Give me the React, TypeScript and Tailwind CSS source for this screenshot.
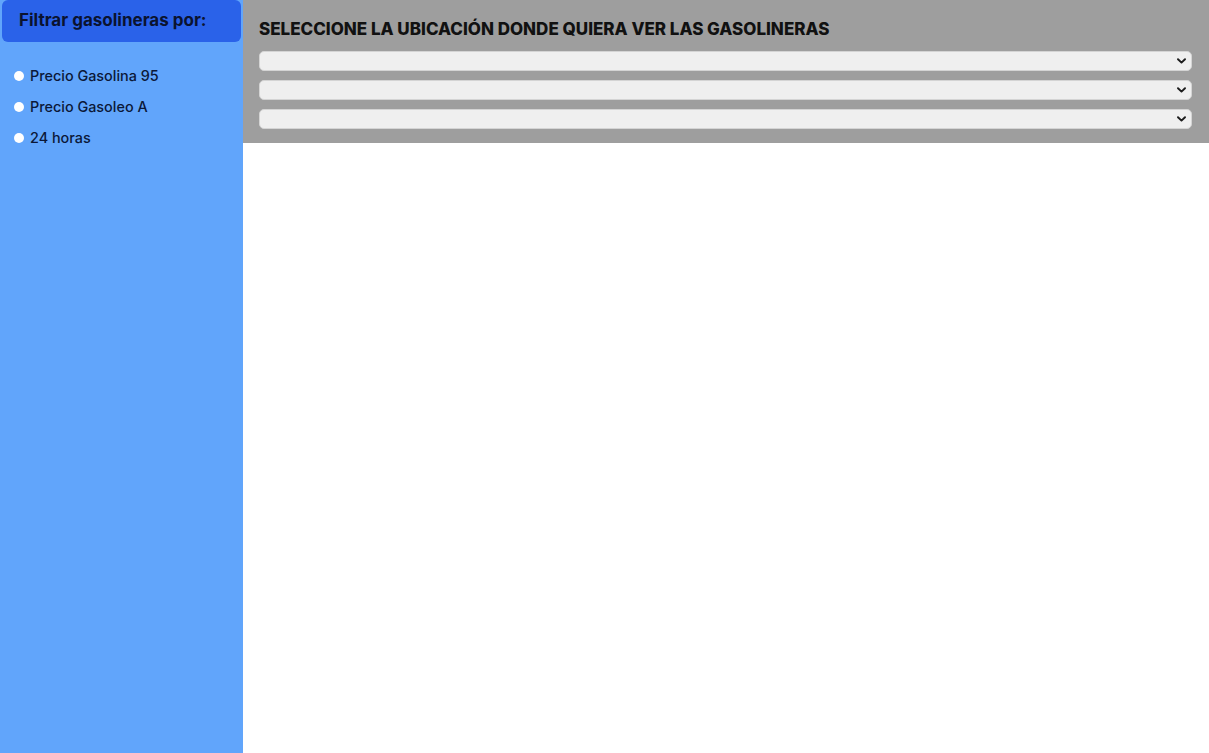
import React, { useState } from 'react';

const filtros = ['Precio Gasolina 95', 'Precio Gasoleo A', '24 horas'];

const Chevron: React.FC = () => (
  <svg
    className="pointer-events-none absolute right-[6px] top-1/2 -translate-y-1/2"
    width="9"
    height="6"
    viewBox="0 0 9 6"
    fill="none"
  >
    <path d="M1 1.2 L4.5 4.6 L8 1.2" stroke="#1c1c1c" strokeWidth="1.9" strokeLinecap="round" strokeLinejoin="round" />
  </svg>
);

const Selector: React.FC = () => (
  <div className="relative">
    <select className="block h-[20px] w-full appearance-none rounded-[5px] border border-[#d4d4d4] bg-[#efefef] text-[12px] outline-none">
      <option value=""></option>
    </select>
    <Chevron />
  </div>
);

export default function App() {
  const [filtro, setFiltro] = useState<string | null>(null);

  return (
    <div className="flex h-[753px] w-full bg-white font-['Inter','Noto_Sans',sans-serif] text-[#0b1838]">
      {/* Sidebar */}
      <aside className="w-[243px] shrink-0 bg-[#61a5fb] px-[2px]">
        <div className="flex h-[42px] items-center rounded-[6px] bg-[#2a62e9] pl-[17px]">
          <h2 className="text-[17px] font-bold text-[#0a1330]">Filtrar gasolineras por:</h2>
        </div>
        <div className="mt-[18px] flex flex-col">
          {filtros.map((f) => (
            <label key={f} className="flex h-[31px] cursor-pointer items-center gap-[6px] pl-[12px] text-[14.4px] font-medium">
              <input
                type="radio"
                name="filtro"
                checked={filtro === f}
                onChange={() => setFiltro(f)}
                className="h-[10px] w-[10px] appearance-none rounded-full bg-white checked:border-[3px] checked:border-[#2a62e9]"
              />
              {f}
            </label>
          ))}
        </div>
      </aside>

      {/* Contenido */}
      <main className="flex-1">
        <div className="h-[143px] bg-[#9e9e9e] pl-[16px] pr-[17px] pt-[18px]">
          <h1 className="text-[17px] leading-[22px] font-extrabold text-[#111111]">
            SELECCIONE LA UBICACIÓN DONDE QUIERA VER LAS GASOLINERAS
          </h1>
          <div className="mt-[11px] flex flex-col gap-[9px]">
            <Selector />
            <Selector />
            <Selector />
          </div>
        </div>
      </main>
    </div>
  );
}
